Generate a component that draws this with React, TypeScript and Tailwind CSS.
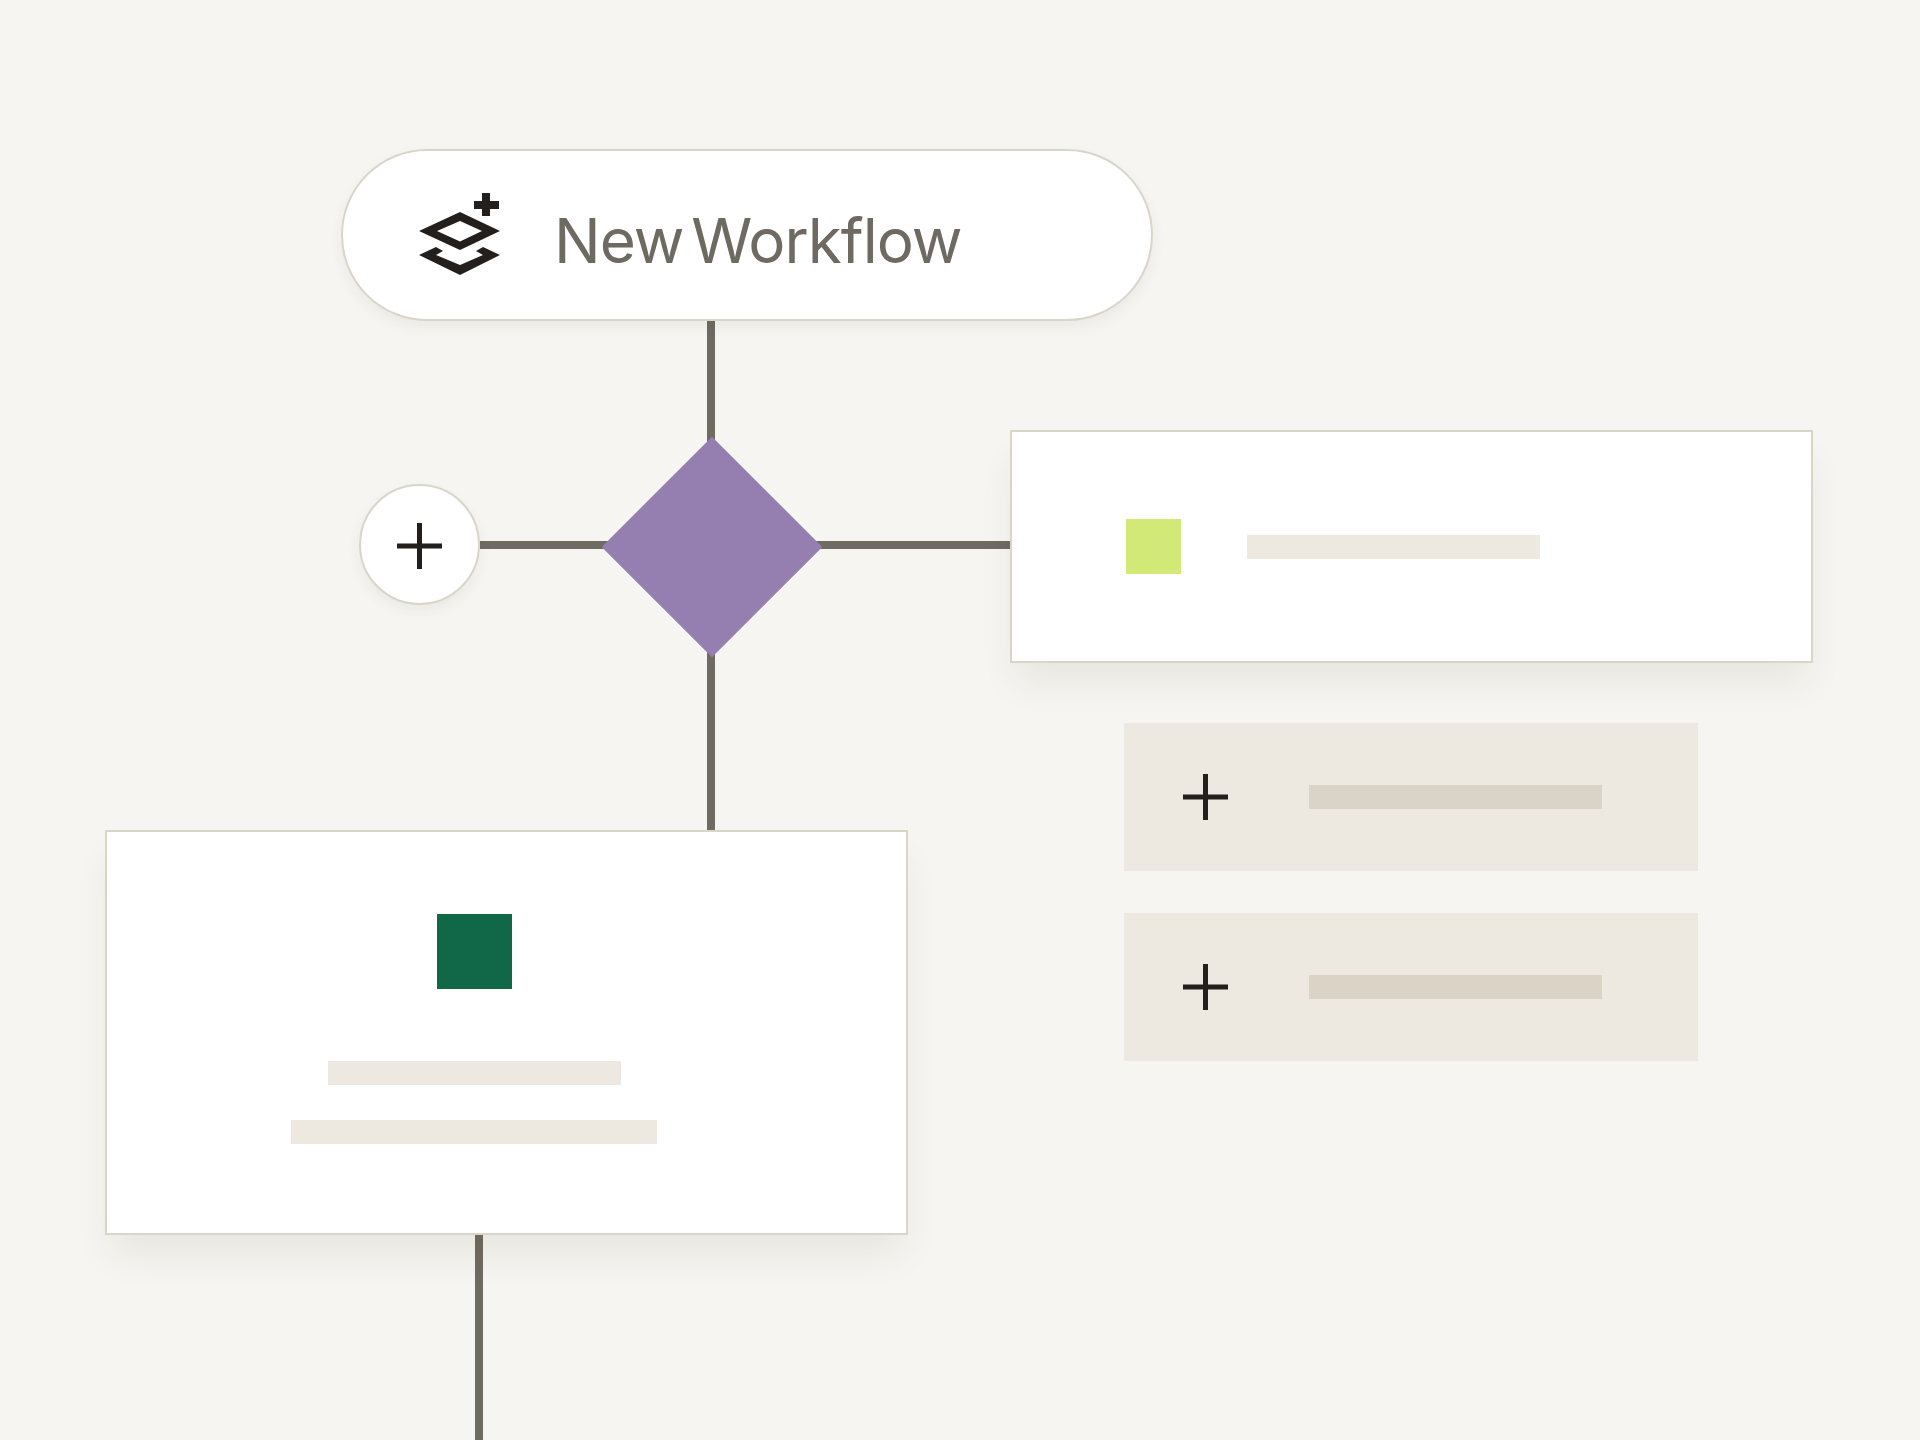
const Plus = () => (
  <svg width="45" height="46" viewBox="0 0 45 46" className="shrink-0">
    <rect x="0" y="20.5" width="45" height="5" fill="#231f1c" />
    <rect x="20" y="0" width="5" height="46" fill="#231f1c" />
  </svg>
);

const WorkflowIcon = () => (
  <svg width="81" height="82" viewBox="0 0 81 82" className="shrink-0 -mt-[2px]">
    <path
      fillRule="evenodd"
      d="M0 38 41 19 81 38 41 57ZM18 38 41 48.5 63 38 41 28Z"
      fill="#231f1c"
    />
    <path d="M0 62 17 54 24 58 17 62 41 72 64 62 57 58 64 54 81 62 41 82Z" fill="#231f1c" />
    <rect x="63" y="0" width="8" height="23" fill="#231f1c" />
    <rect x="55" y="8" width="25" height="8" fill="#231f1c" />
  </svg>
);

const Row = ({ barColor }: { barColor: string }) => (
  <div className="w-[574px] h-[148px] bg-[#ede9e1] flex items-center pl-[59px]">
    <Plus />
    <div className={`ml-[81px] w-[293px] h-[24px] ${barColor}`} />
  </div>
);

export default function App() {
  return (
    <div className="relative w-[1920px] h-[1440px] overflow-hidden bg-[#f6f5f1]">
      {/* connectors */}
      <div className="absolute left-[707px] top-[320px] w-[8px] h-[510px] bg-[#6f6a62]" />
      <div className="absolute left-[480px] top-[541px] w-[531px] h-[8px] bg-[#6f6a62]" />
      <div className="absolute left-[475px] top-[1235px] w-[8px] h-[205px] bg-[#6f6a62]" />

      {/* start node */}
      <div className="absolute left-[341px] top-[149px] w-[812px] h-[172px] rounded-[86px] bg-white border-2 border-[#d9d5c9] shadow-[0_6px_14px_rgba(60,50,30,0.06)] flex items-center pl-[76px]">
        <WorkflowIcon />
        <span className="ml-[54px] mt-[12px] text-[62px] font-normal leading-none tracking-[-0.016em] [word-spacing:-0.14em] text-[#6e6a62] font-['Inter',Arial,sans-serif] whitespace-nowrap">
          New Workflow
        </span>
      </div>

      {/* add branch */}
      <div className="absolute left-[359px] top-[484px] w-[121px] h-[121px] rounded-full bg-white border-2 border-[#d9d5c9] shadow-[0_6px_14px_rgba(60,50,30,0.06)] flex items-center justify-center pt-[2px]">
        <Plus />
      </div>

      {/* decision */}
      <div className="absolute left-[634px] top-[469px] w-[156px] h-[156px] rotate-45 bg-[#957fb1]" />

      {/* right card */}
      <div className="absolute left-[1010px] top-[430px] w-[803px] h-[233px] bg-white border-2 border-[#d9d5c9] shadow-[0_24px_36px_-6px_rgba(60,50,30,0.08)] flex items-center pl-[114px]">
        <div className="w-[55px] h-[55px] bg-[#d3e977]" />
        <div className="ml-[66px] w-[293px] h-[24px] bg-[#ede9e1]" />
      </div>

      {/* option rows */}
      <div className="absolute left-[1124px] top-[723px] flex flex-col gap-[42px]">
        <Row barColor="bg-[#d9d4c7]" />
        <Row barColor="bg-[#dbd3c6]" />
      </div>

      {/* bottom card */}
      <div className="absolute left-[105px] top-[830px] w-[803px] h-[405px] bg-white border-2 border-[#d9d5c9] shadow-[0_24px_36px_-6px_rgba(60,50,30,0.08)] flex flex-col items-center pt-[82px] pr-[65px]">
        <div className="w-[75px] h-[75px] bg-[#116848]" />
        <div className="mt-[72px] w-[293px] h-[24px] bg-[#ede9e1]" />
        <div className="mt-[35px] w-[366px] h-[24px] bg-[#ede9e1]" />
      </div>
    </div>
  );
}
